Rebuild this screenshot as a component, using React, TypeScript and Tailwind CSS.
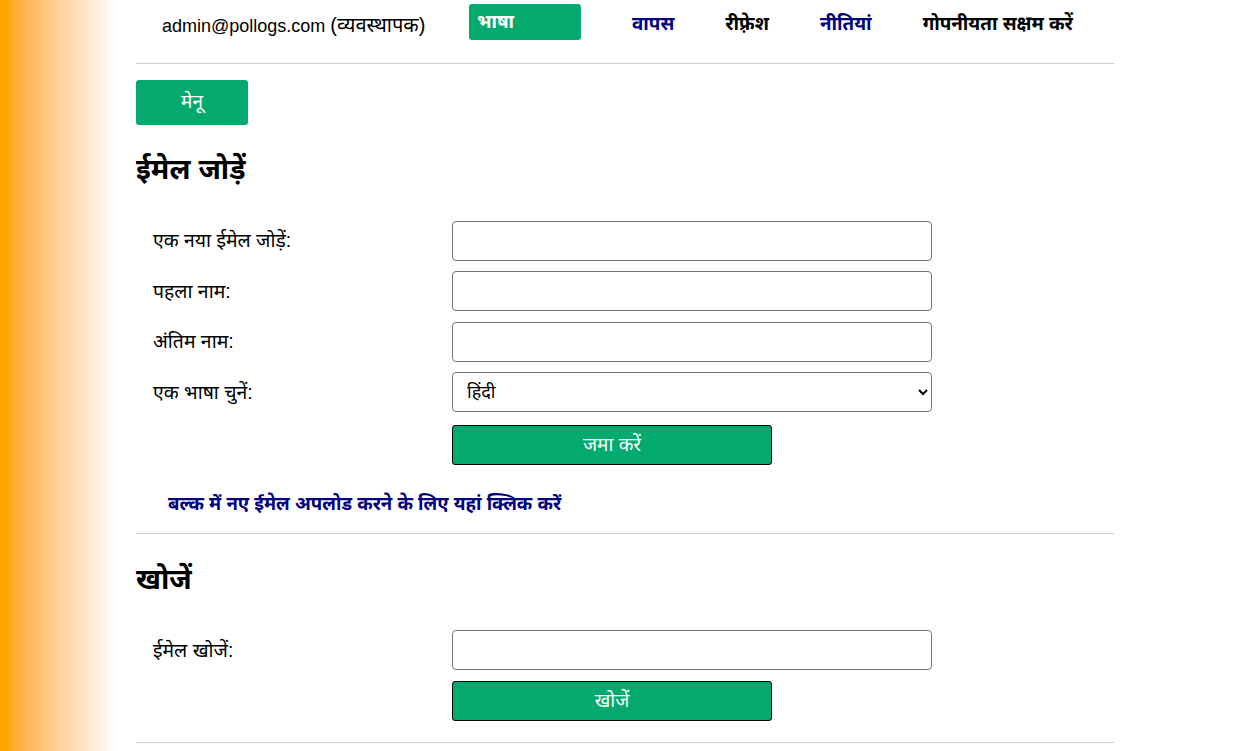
import React from 'react';

const labelCls = 'w-[299px] shrink-0 text-[19.4px] text-black';
const inputCls = 'h-[40px] w-[480px] rounded-[4px] border border-[#767676] bg-white px-3 text-[18px]';
const greenBtn =
  'h-[40px] w-[320px] rounded-[3px] border border-black bg-[#04AA6D] text-[19px] text-white';

function FormRow({ label, children }: { label: string; children: React.ReactNode }) {
  return (
    <div className="flex items-center pl-[17px]">
      <span className={labelCls}>{label}</span>
      {children}
    </div>
  );
}

export default function App() {
  return (
    <div
      className="flex min-h-[751px] w-full bg-white"
      style={{ fontFamily: '"Liberation Sans", "Noto Sans", Arial, sans-serif' }}
    >
      {/* left decorative strip */}
      <div className="w-[120px] shrink-0 bg-gradient-to-r from-[#FFA500] from-[6%] to-white to-[98%]" />

      <div className="ml-[16px] w-[978px]">
        {/* top bar */}
        <div className="flex h-[63px] items-start pt-[4px]">
          <span className="ml-[26px] mt-[6px] w-[272px] shrink-0 whitespace-nowrap text-[18px] text-black">
            admin@pollogs.com <span className="text-[20px]">(व्यवस्थापक)</span>
          </span>
          <button className="ml-[35px] h-[36px] w-[112px] shrink-0 rounded-[3px] bg-[#04AA6D] pl-[8px] text-left text-[18.5px] font-bold text-white">
            भाषा
          </button>
          <nav className="ml-[51px] mt-[6px] flex gap-[51px] whitespace-nowrap text-[18.8px] font-bold">
            <a className="text-[#000080]">वापस</a>
            <a className="text-black">रीफ़्रेश</a>
            <a className="text-[#000080]">नीतियां</a>
            <a className="text-black">गोपनीयता सक्षम करें</a>
          </nav>
        </div>
        <hr className="border-t border-[#ccc]" />

        <button className="mt-[16px] h-[45px] w-[112px] rounded-[3px] bg-[#04AA6D] text-[19px] text-white">
          मेनू
        </button>

        <h2 className="mt-[24px] text-[28.5px] font-bold leading-[40px] text-black">ईमेल जोड़ें</h2>

        <div className="mt-[32px] flex flex-col gap-[10.4px]">
          <FormRow label="एक नया ईमेल जोड़ें:">
            <input className={inputCls} />
          </FormRow>
          <FormRow label="पहला नाम:">
            <input className={inputCls} />
          </FormRow>
          <FormRow label="अंतिम नाम:">
            <input className={inputCls} />
          </FormRow>
          <FormRow label="एक भाषा चुनें:">
            <select className={inputCls + ' pl-[10px]'} defaultValue="hi">
              <option value="hi">हिंदी</option>
              <option value="en">English</option>
            </select>
          </FormRow>
        </div>
        <div className="mt-[13px] pl-[316px]">
          <button className={greenBtn}>जमा करें</button>
        </div>

        <div className="mt-[25px] pl-[32px] text-[18.6px] font-bold text-[#000080]">
          <a>बल्क में नए ईमेल अपलोड करने के लिए यहां क्लिक करें</a>
        </div>
        <hr className="mt-[15px] border-t border-[#ccc]" />

        <h2 className="mt-[25px] text-[28.5px] font-bold leading-[40px] text-black">खोजें</h2>

        <div className="mt-[31px]">
          <FormRow label="ईमेल खोजें:">
            <input className={inputCls} />
          </FormRow>
        </div>
        <div className="mt-[11px] pl-[316px]">
          <button className={greenBtn}>खोजें</button>
        </div>
        <hr className="mt-[21px] border-t border-[#ccc]" />
      </div>
    </div>
  );
}
